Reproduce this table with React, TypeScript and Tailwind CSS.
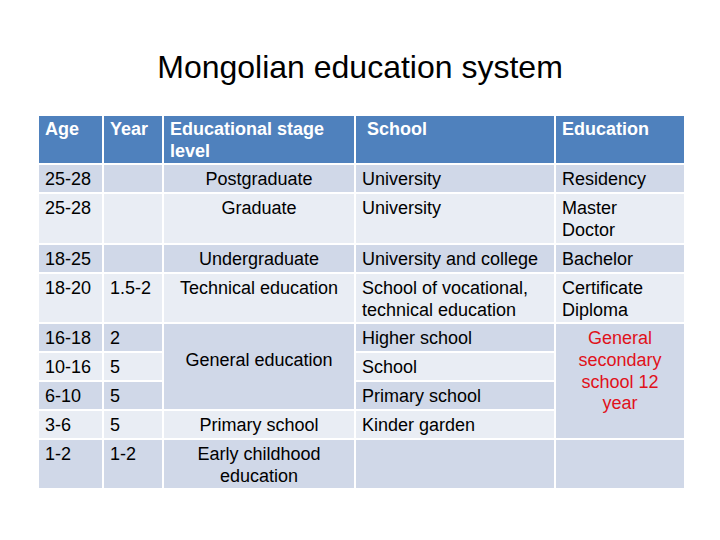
const dark = "bg-[#d0d8e8]";
const light = "bg-[#e9edf4]";

type Cell = {
  text?: React.ReactNode;
  bg: string;
  center?: boolean;
  rowSpan?: number;
  extra?: string;
};

type Row = { h: string; cells: Cell[] };

const rows: Row[] = [
  {
    h: "h-[29px]",
    cells: [
      { text: "25-28", bg: dark },
      { bg: dark },
      { text: "Postgraduate", bg: dark, center: true },
      { text: "University", bg: dark },
      { text: "Residency", bg: dark },
    ],
  },
  {
    h: "h-[51px]",
    cells: [
      { text: "25-28", bg: light },
      { bg: light },
      { text: "Graduate", bg: light, center: true },
      { text: "University", bg: light },
      { text: <>Master<br />Doctor</>, bg: light },
    ],
  },
  {
    h: "h-[29px]",
    cells: [
      { text: "18-25", bg: dark },
      { bg: dark },
      { text: "Undergraduate", bg: dark, center: true },
      { text: "University and college", bg: dark },
      { text: "Bachelor", bg: dark },
    ],
  },
  {
    h: "h-[50px]",
    cells: [
      { text: "18-20", bg: light },
      { text: "1.5-2", bg: light },
      { text: "Technical education", bg: light, center: true },
      { text: <>School of vocational,<br />technical education</>, bg: light },
      { text: <>Certificate<br />Diploma</>, bg: light },
    ],
  },
  {
    h: "h-[29px]",
    cells: [
      { text: "16-18", bg: dark },
      { text: "2", bg: dark },
      { text: "General education", bg: dark, center: true, rowSpan: 3, extra: "pt-[26px]" },
      { text: "Higher school", bg: dark },
      {
        text: <>General<br />secondary<br />school 12<br />year</>,
        bg: dark,
        center: true,
        rowSpan: 4,
        extra: "text-[#e0121b]",
      },
    ],
  },
  {
    h: "h-[29px]",
    cells: [
      { text: "10-16", bg: light },
      { text: "5", bg: light },
      { text: "School", bg: light },
    ],
  },
  {
    h: "h-[29px]",
    cells: [
      { text: "6-10", bg: dark },
      { text: "5", bg: dark },
      { text: "Primary school", bg: dark },
    ],
  },
  {
    h: "h-[29px]",
    cells: [
      { text: "3-6", bg: light },
      { text: "5", bg: light },
      { text: "Primary school", bg: light, center: true },
      { text: "Kinder garden", bg: light },
    ],
  },
  {
    h: "h-[50px]",
    cells: [
      { text: "1-2", bg: dark },
      { text: "1-2", bg: dark },
      { text: <>Early childhood<br />education</>, bg: dark, center: true },
      { bg: dark },
      { bg: dark },
    ],
  },
];

export default function App() {
  return (
    <div className="w-[720px] h-[540px] bg-white font-['Liberation_Sans',Arial,sans-serif] text-black">
      <h1 className="pt-[48px] text-center text-[32px] leading-[1.2] font-normal">
        Mongolian education system
      </h1>

      <table className="ml-[37px] mt-[28px] w-[647px] table-fixed border-collapse text-[18px] leading-[21.6px]">
        <colgroup>
          <col className="w-[65px]" />
          <col className="w-[60px]" />
          <col className="w-[192px]" />
          <col className="w-[200px]" />
          <col className="w-[130px]" />
        </colgroup>
        <thead>
          <tr className="h-[49px] bg-[#4f81bd] text-white font-bold">
            <th className="border-2 border-white px-[6px] pt-[3px] text-left align-top font-bold">Age</th>
            <th className="border-2 border-white px-[6px] pt-[3px] text-left align-top font-bold">Year</th>
            <th className="border-2 border-white px-[6px] pt-[3px] text-left align-top font-bold">
              Educational stage level
            </th>
            <th className="border-2 border-white pl-[11px] pr-[6px] pt-[3px] text-left align-top font-bold">
              School
            </th>
            <th className="border-2 border-white px-[6px] pt-[3px] text-left align-top font-bold">
              Education
            </th>
          </tr>
        </thead>
        <tbody>
          {rows.map((row, i) => (
            <tr key={i} className={row.h}>
              {row.cells.map((c, j) => (
                <td
                  key={j}
                  rowSpan={c.rowSpan}
                  className={`border-2 border-white px-[6px] pt-[4px] align-top ${c.bg} ${
                    c.center ? "text-center" : "text-left"
                  } ${c.extra ?? ""}`}
                >
                  {c.text}
                </td>
              ))}
            </tr>
          ))}
        </tbody>
      </table>
    </div>
  );
}
